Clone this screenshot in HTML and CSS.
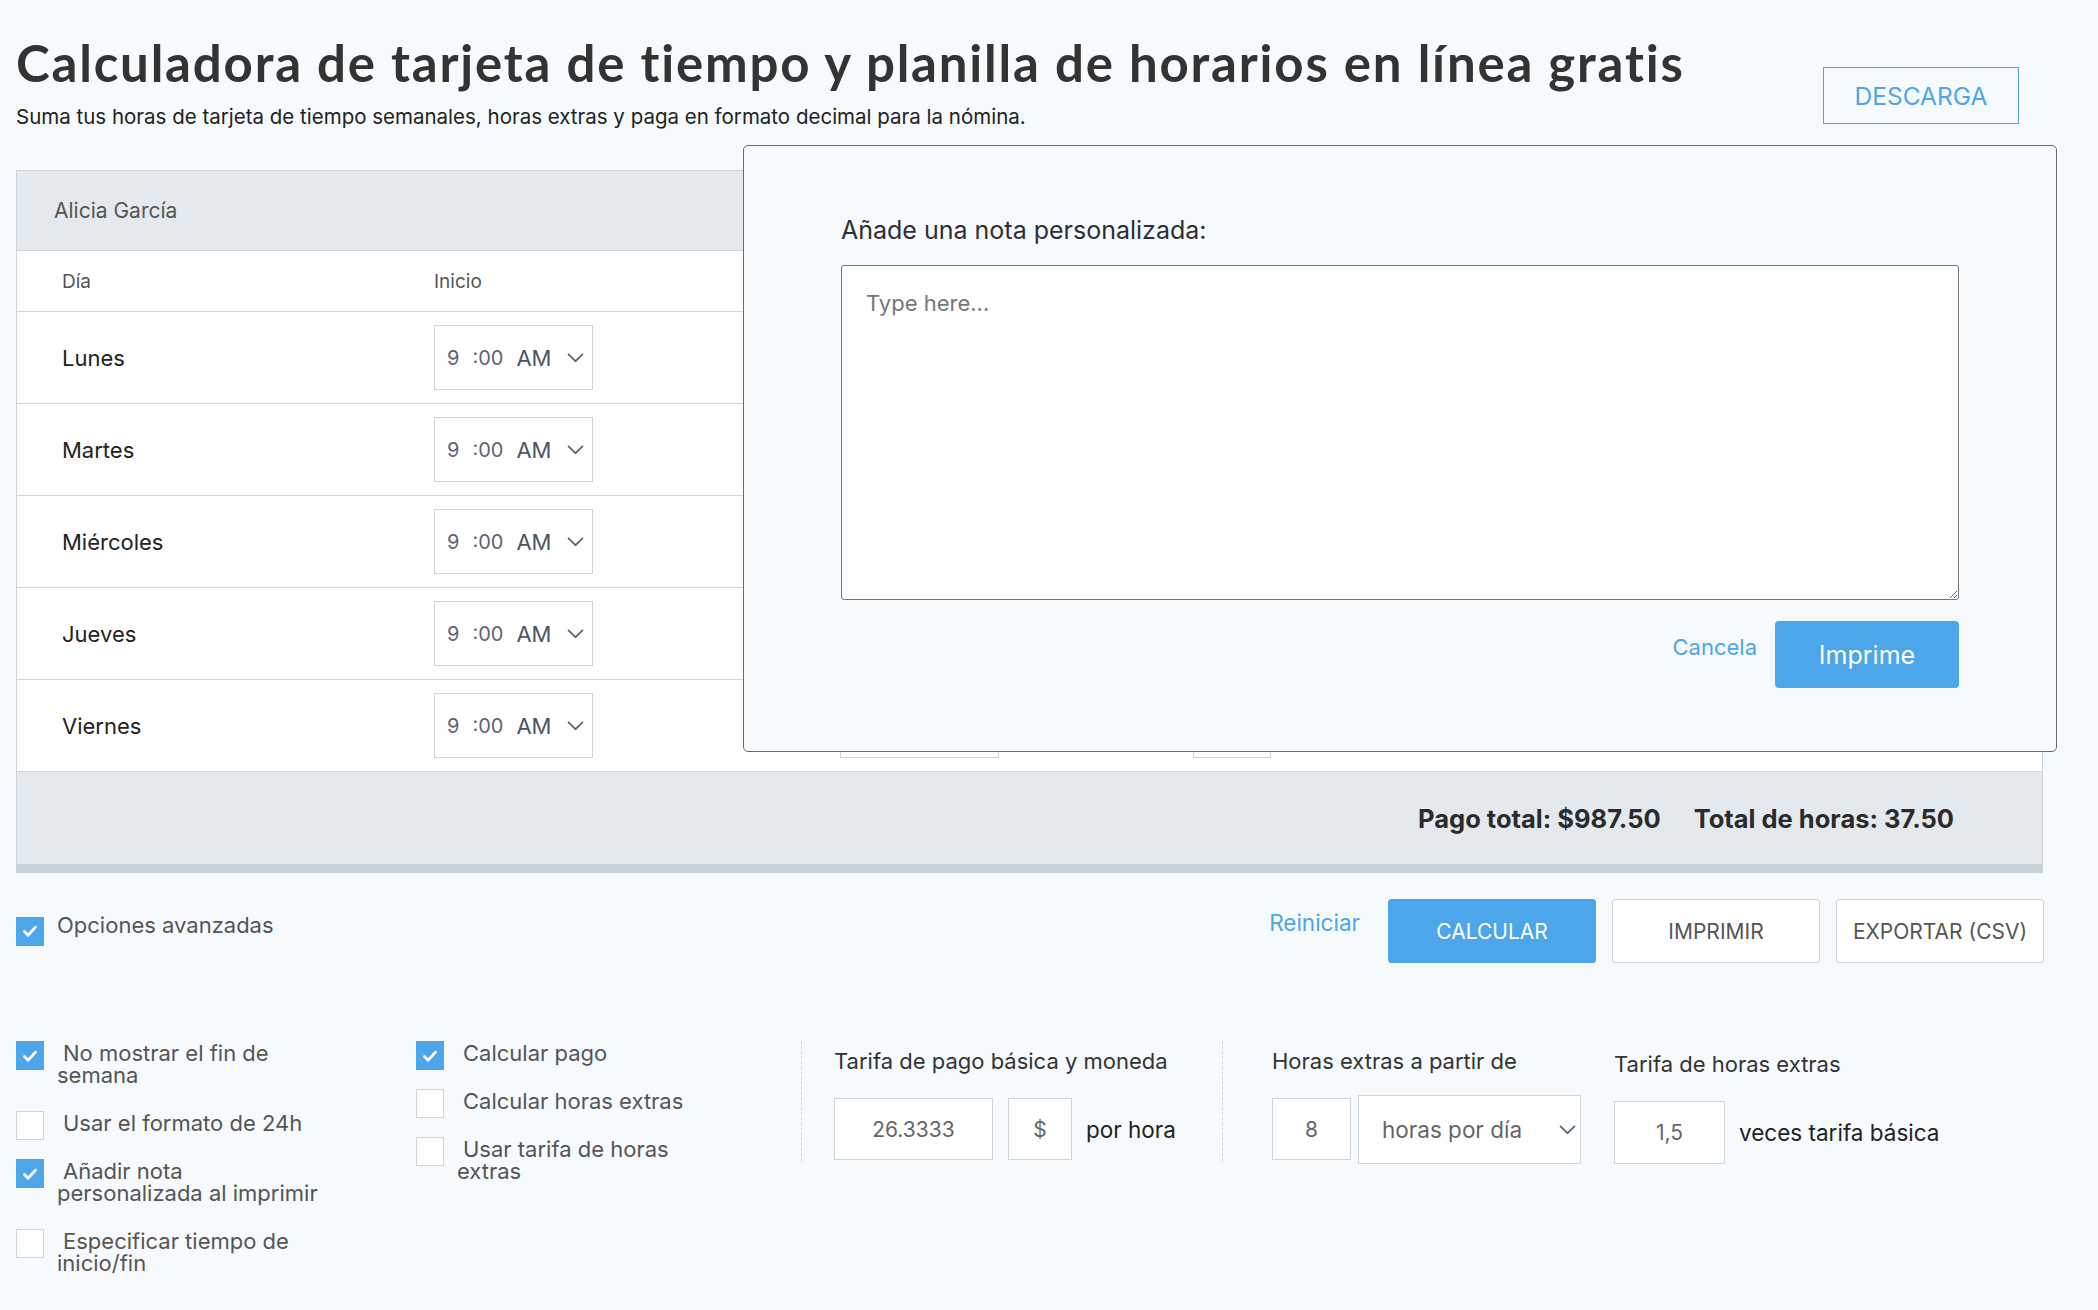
FILE: index.html
```html
<!DOCTYPE html>
<html lang="es">
<head>
  <meta charset="UTF-8" />
  <meta name="viewport" content="width=device-width, initial-scale=1.0" />
  <title>Calculadora de tarjeta de tiempo</title>
  <link rel="stylesheet" href="styles.css">
</head>
<body>
  <div class="page">
    <header class="top">
      <div class="top-text">
        <h1>Calculadora de tarjeta de tiempo y planilla de horarios en línea gratis</h1>
        <p class="lead">Suma tus horas de tarjeta de tiempo semanales, horas extras y paga en formato decimal para la nómina.</p>
      </div>
      <button class="btn-outline">DESCARGA</button>
    </header>

    <div class="sheet">
      <div class="sheet-name">Alicia García</div>
      <div class="sheet-row sheet-cols">
        <div class="c-day">Día</div>
        <div>Inicio</div>
        <div>Fin</div>
        <div>Descanso</div>
      </div>
      <div id="days"></div>
      <div class="sheet-total">
        <span>Pago total: $987.50</span>
        <span>Total de horas: 37.50</span>
      </div>
    </div>

    <div class="actions">
      <label class="check check-adv">
        <span class="box on"><svg viewBox="0 0 20 20"><path d="M5 10.5l3.2 3.3L15 6.5"/></svg></span>
        <span class="check-text">Opciones avanzadas</span>
      </label>
      <div class="action-btns">
        <a class="link-btn reset">Reiniciar</a>
        <button class="btn btn-blue">CALCULAR</button>
        <button class="btn">IMPRIMIR</button>
        <button class="btn">EXPORTAR (CSV)</button>
      </div>
    </div>

    <div class="options">
      <div class="opt-col">
        <label class="check">
          <span class="box on"><svg viewBox="0 0 20 20"><path d="M5 10.5l3.2 3.3L15 6.5"/></svg></span>
          <span class="check-text">No mostrar el fin de semana</span>
        </label>
        <label class="check">
          <span class="box"></span>
          <span class="check-text">Usar el formato de 24h</span>
        </label>
        <label class="check">
          <span class="box on"><svg viewBox="0 0 20 20"><path d="M5 10.5l3.2 3.3L15 6.5"/></svg></span>
          <span class="check-text">Añadir nota personalizada al imprimir</span>
        </label>
        <label class="check">
          <span class="box"></span>
          <span class="check-text">Especificar tiempo de inicio/fin</span>
        </label>
      </div>
      <div class="opt-col opt-col-2">
        <label class="check">
          <span class="box on"><svg viewBox="0 0 20 20"><path d="M5 10.5l3.2 3.3L15 6.5"/></svg></span>
          <span class="check-text">Calcular pago</span>
        </label>
        <label class="check">
          <span class="box"></span>
          <span class="check-text">Calcular horas extras</span>
        </label>
        <label class="check">
          <span class="box"></span>
          <span class="check-text">Usar tarifa de horas extras</span>
        </label>
      </div>
      <div class="field field-rate">
        <div class="field-label">Tarifa de pago básica y moneda</div>
        <div class="field-inputs">
          <div class="inp w-rate">26.3333</div>
          <div class="inp w-cur">$</div>
          <span class="unit">por hora</span>
        </div>
      </div>
      <div class="field field-ot">
        <div class="field-label">Horas extras a partir de</div>
        <div class="field-inputs">
          <div class="inp w-ot">8</div>
          <div class="sel w-per">
            <span>horas por día</span>
            <svg class="chev" viewBox="0 0 16 10"><path d="M1 1.5l7 7 7-7"/></svg>
          </div>
        </div>
      </div>
      <div class="field field-otr">
        <div class="field-label">Tarifa de horas extras</div>
        <div class="field-inputs">
          <div class="inp w-otr">1,5</div>
          <span class="unit">veces tarifa básica</span>
        </div>
      </div>
    </div>
  </div>

  <div class="modal">
    <div class="modal-label">Añade una nota personalizada:</div>
    <textarea class="note" placeholder="Type here..."></textarea>
    <div class="modal-btns">
      <a class="link-btn cancel">Cancela</a>
      <button class="btn-print">Imprime</button>
    </div>
  </div>

  <script>
    const days = ["Lunes", "Martes", "Miércoles", "Jueves", "Viernes"];

    function timeBox(h, ap) {
      return `
        <div class="time">
          <span class="t-h">${h}</span><span class="t-m">:00</span><span class="t-ap">${ap}</span>
          <svg class="chev" viewBox="0 0 16 10"><path d="M1 1.5l7 7 7-7"/></svg>
        </div>`;
    }

    const container = document.getElementById("days");
    days.forEach(day => {
      const row = document.createElement("div");
      row.className = "sheet-row day-row";
      row.innerHTML = `
        <div class="c-day">${day}</div>
        <div>${timeBox(9, "AM")}</div>
        <div>${timeBox(5, "PM")}</div>
        <div><div class="brk">30</div></div>
      `;
      container.appendChild(row);
    });
  </script>
</body>
</html>
```

FILE: styles.css
```css
* {
  box-sizing: border-box;
}
body {
  margin: 0;
  background-color: #f6fafd;
  font-family: Inter, "Noto Sans", sans-serif;
  color: #222;
  position: relative;
}
.page {
  padding: 0 55px 0 16px;
}

/* cabecera */
.top {
  display: flex;
  justify-content: space-between;
  align-items: flex-start;
  padding-top: 33px;
}
h1 {
  margin: 0;
  font-family: Lato, sans-serif;
  font-weight: 700;
  font-size: 51px;
  line-height: 60px;
  letter-spacing: 1.8px;
  color: #333;
}
.lead {
  margin: 12px 0 0;
  font-size: 20.5px;
  line-height: 24px;
  color: #222;
}
.btn-outline {
  margin: 34px 24px 0 0;
  width: 196px;
  height: 57px;
  background: transparent;
  border: 1px solid #4da6ea;
  color: #4da6ea;
  font-family: Inter, sans-serif;
  font-size: 24.5px;
  font-weight: 400;
}

/* tabla */
.sheet {
  margin-top: 41px;
  border: 1px solid #ccd4dc;
  border-bottom: none;
  background: #fff;
}
.sheet-name {
  height: 80px;
  padding-left: 37px;
  display: flex;
  align-items: center;
  background: #e4e9ed;
  border-bottom: 1px solid #ccd4dc;
  font-size: 21px;
  color: #555;
}
.sheet-row {
  display: grid;
  grid-template-columns: 417px 406px 353px 1fr;
  align-items: center;
  border-bottom: 1px solid #ccd4dc;
}
.c-day {
  padding-left: 45px;
}
.sheet-cols {
  height: 61px;
  font-size: 19px;
  color: #555;
}
.day-row {
  height: 92px;
  font-size: 22px;
  color: #222;
}
.time {
  width: 159px;
  height: 65px;
  border: 1px solid #ccd4dc;
  display: flex;
  align-items: center;
  padding: 0 8px 0 12px;
  color: #5b6573;
}
.t-h, .t-m {
  font-size: 20px;
  margin-right: 13px;
}
.t-ap {
  font-size: 22px;
  color: #4b5563;
}
.chev {
  margin-left: auto;
  width: 17px;
  height: 11px;
  fill: none;
  stroke: #5b6573;
  stroke-width: 1.6;
}
.brk {
  width: 78px;
  height: 65px;
  border: 1px solid #ccd4dc;
}
.sheet-total {
  height: 101px;
  display: flex;
  justify-content: flex-end;
  align-items: center;
  gap: 33px;
  padding: 0 88px 0 0;
  background: #e4e9ed;
  border-bottom: 9px solid #c9d1d9;
  font-size: 25.5px;
  font-weight: 700;
  color: #2b2b2b;
}

/* acciones */
.actions {
  margin-top: 26px;
  display: flex;
  justify-content: space-between;
  align-items: center;
  height: 64px;
}
.action-btns {
  display: flex;
  align-items: flex-start;
  height: 64px;
  margin-right: -1px;
}
.link-btn {
  color: #4da6ea;
  cursor: pointer;
}
.reset {
  font-size: 22.5px;
  margin: 10px 28px 0 0;
}
.btn {
  width: 208px;
  height: 64px;
  margin-left: 16px;
  background: #fff;
  border: 1px solid #ccd4dc;
  border-radius: 3px;
  font-family: Inter, sans-serif;
  font-size: 21px;
  color: #555;
}
.reset + .btn {
  margin-left: 0;
}
.btn-blue {
  background: #4da6ea;
  border-color: #4da6ea;
  color: #fff;
}

/* checkboxes */
.check {
  display: flex;
  align-items: flex-start;
  font-size: 22px;
  color: #555;
}
.box {
  flex: none;
  width: 28px;
  height: 29px;
  background: #fff;
  border: 1px solid #ccd4dc;
  display: flex;
  align-items: center;
  justify-content: center;
}
.box.on {
  background: #4da6ea;
  border-color: #4da6ea;
}
.box svg {
  width: 22px;
  height: 22px;
  fill: none;
  stroke: #fff;
  stroke-width: 2.6;
  stroke-linecap: round;
  stroke-linejoin: round;
}
.check-text {
  margin-left: 13px;
  margin-top: 1px;
  padding-bottom: 6px;
  line-height: 22px;
  text-indent: 6px;
}
.check-adv .check-text {
  text-indent: 0;
  padding-bottom: 0;
  margin-top: -3px;
}

/* opciones avanzadas */
.options {
  margin-top: 78px;
  display: flex;
  align-items: flex-start;
}
.opt-col {
  width: 400px;
  display: flex;
  flex-direction: column;
  gap: 19px;
}
.opt-col .check-text {
  max-width: 268px;
}
.opt-col-2 {
  width: 385px;
}
.opt-col-2 .check-text {
  max-width: 255px;
}
.field {
  padding-top: 8px;
}
.field-label {
  font-size: 22px;
  line-height: 24px;
  color: #333;
}
.field-inputs {
  margin-top: 25px;
  display: flex;
  align-items: center;
  height: 62px;
}
.field-rate {
  width: 422px;
  height: 120px;
  padding-left: 32px;
  border-left: 1px dashed #ccd4dc;
  border-right: 1px dashed #ccd4dc;
}
.field-ot {
  margin-left: 49px;
  width: 342px;
}
.field-otr {
  padding-top: 11px;
}
.inp {
  height: 62px;
  background: #fff;
  border: 1px solid #ccd4dc;
  display: flex;
  align-items: center;
  justify-content: center;
  font-size: 21px;
  color: #666;
}
.w-rate { width: 159px; }
.w-cur { width: 64px; margin-left: 15px; }
.w-ot { width: 79px; }
.w-otr { width: 111px; height: 63px; }
.unit {
  margin-left: 14px;
  font-size: 22.5px;
  color: #222;
}
.sel {
  width: 223px;
  height: 69px;
  margin-left: 7px;
  background: #fff;
  border: 1px solid #ccd4dc;
  display: flex;
  align-items: center;
  padding: 0 4px 0 23px;
  font-size: 22.5px;
  color: #666;
}

/* modal nota */
.modal {
  position: absolute;
  left: 743px;
  top: 145px;
  width: 1314px;
  height: 607px;
  background: #f7fafd;
  border: 1px solid #6b6b6b;
  border-radius: 5px;
  padding: 69px 97px 0;
}
.modal-label {
  font-size: 25px;
  line-height: 30px;
  color: #2b2f36;
}
.note {
  display: block;
  margin-top: 20px;
  width: 1118px;
  height: 335px;
  padding: 24px;
  border: 1px solid #767676;
  border-radius: 3px;
  background: #fff;
  font-family: Inter, sans-serif;
  font-size: 22px;
  color: #333;
}
.note::placeholder {
  color: #777;
}
.modal-btns {
  margin-top: 21px;
  display: flex;
  justify-content: flex-end;
  align-items: flex-start;
  width: 1118px;
}
.cancel {
  font-size: 22px;
  margin: 13px 18px 0 0;
}
.btn-print {
  width: 184px;
  height: 67px;
  background: #4da6ea;
  border: none;
  border-radius: 4px;
  color: #fff;
  font-family: Inter, sans-serif;
  font-size: 25px;
}
```
